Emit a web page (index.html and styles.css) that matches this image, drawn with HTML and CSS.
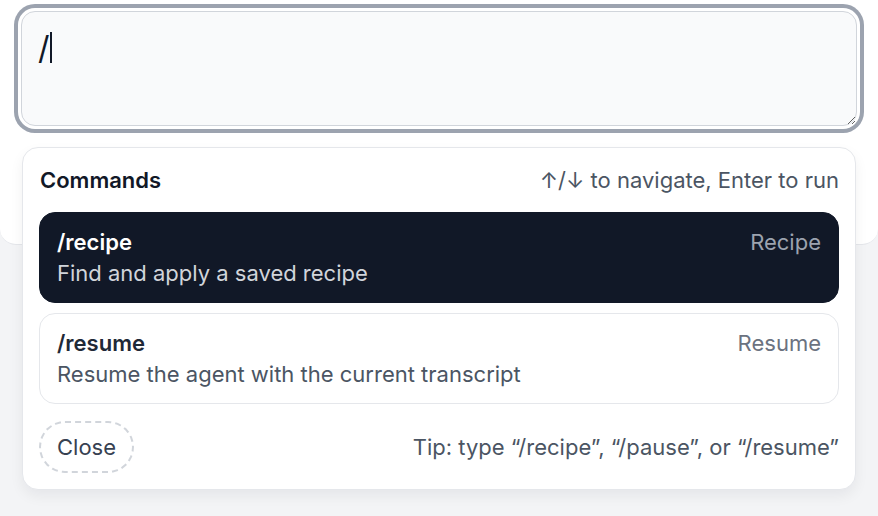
FILE: index.html
```html
<!DOCTYPE html>
<html lang="en">
<head>
<meta charset="utf-8">
<title>Commands</title>
<link rel="stylesheet" href="styles.css">
</head>
<body>
<div class="page">
  <section class="panel">
    <div class="composer" role="textbox" aria-label="Message">/<span class="caret"></span></div>
  </section>

  <div class="palette" role="listbox" aria-label="Commands">
    <div class="palette-head">
      <span class="palette-title">Commands</span>
      <span class="palette-hint">↑/↓ to navigate, Enter to run</span>
    </div>
    <div class="cmd-list">
      <div class="cmd cmd-active" role="option" aria-selected="true">
        <div class="cmd-top">
          <span class="cmd-name">/recipe</span>
          <span class="cmd-tag">Recipe</span>
        </div>
        <div class="cmd-desc">Find and apply a saved recipe</div>
      </div>
      <div class="cmd" role="option">
        <div class="cmd-top">
          <span class="cmd-name">/resume</span>
          <span class="cmd-tag">Resume</span>
        </div>
        <div class="cmd-desc">Resume the agent with the current transcript</div>
      </div>
    </div>
    <div class="palette-foot">
      <button class="close-btn" type="button">Close</button>
      <span class="tip">Tip: type “/recipe”, “/pause”, or “/resume”</span>
    </div>
  </div>
</div>
</body>
</html>
```

FILE: styles.css
```css
* { box-sizing: border-box; }

html, body {
  margin: 0;
  height: 100%;
}

body {
  background: #f3f4f6;
  font-family: Inter, "Noto Sans", "Liberation Sans", sans-serif;
  color: #111827;
}

.page {
  position: relative;
  height: 100%;
}

.panel {
  background: #ffffff;
  height: 245px;
  padding: 11px 21px 0;
  border-bottom: 1px solid #e5e7eb;
  border-radius: 0 0 16px 16px;
}

.composer {
  height: 115px;
  padding: 20px 16px;
  background: #f9fafb;
  border: 1px solid #d1d5db;
  border-radius: 14px;
  box-shadow: 0 0 0 3px #ffffff, 0 0 0 7px #9ca3af;
  font-size: 32px;
  line-height: 31px;
  color: #111827;
  overflow: auto;
  resize: vertical;
}

.caret {
  display: inline-block;
  width: 2px;
  height: 31px;
  margin-left: 0;
  background: #111827;
  vertical-align: top;
}

.palette {
  position: absolute;
  top: 147px;
  left: 22px;
  width: 834px;
  background: #ffffff;
  border: 1px solid #e5e7eb;
  border-radius: 16px;
  padding: 16px;
  box-shadow: 0 6px 14px rgba(17, 24, 39, 0.06);
}

.palette-head {
  display: flex;
  justify-content: space-between;
  align-items: center;
  height: 32px;
  margin-bottom: 16px;
  padding-left: 1px;
  font-size: 22px;
  line-height: 32px;
}

.palette-title {
  font-weight: 600;
  color: #111827;
}

.palette-hint {
  color: #4b5563;
}

.cmd-list {
  display: flex;
  flex-direction: column;
  gap: 10px;
}

.cmd {
  border: 1px solid #e5e7eb;
  border-radius: 16px;
  padding: 14px 17px 13px;
  background: #ffffff;
  font-size: 22px;
  line-height: 30px;
}

.cmd-active {
  background: #111827;
  border-color: #111827;
}

.cmd-top {
  display: flex;
  justify-content: space-between;
}

.cmd-name {
  font-weight: 600;
  color: #1f2937;
}

.cmd-tag {
  color: #6b7280;
}

.cmd-desc {
  line-height: 32px;
  color: #4b5563;
}

.cmd-active .cmd-name { color: #ffffff; }
.cmd-active .cmd-tag { color: #9ca3af; }
.cmd-active .cmd-desc { color: #d1d5db; }

.palette-foot {
  display: flex;
  justify-content: space-between;
  align-items: center;
  margin-top: 17px;
}

.close-btn {
  height: 52px;
  padding: 0 16px;
  border: 2px dashed #d1d5db;
  border-radius: 26px;
  background: #ffffff;
  font-family: inherit;
  font-size: 22px;
  color: #374151;
  cursor: pointer;
}

.tip {
  font-size: 22px;
  color: #4b5563;
}
```
